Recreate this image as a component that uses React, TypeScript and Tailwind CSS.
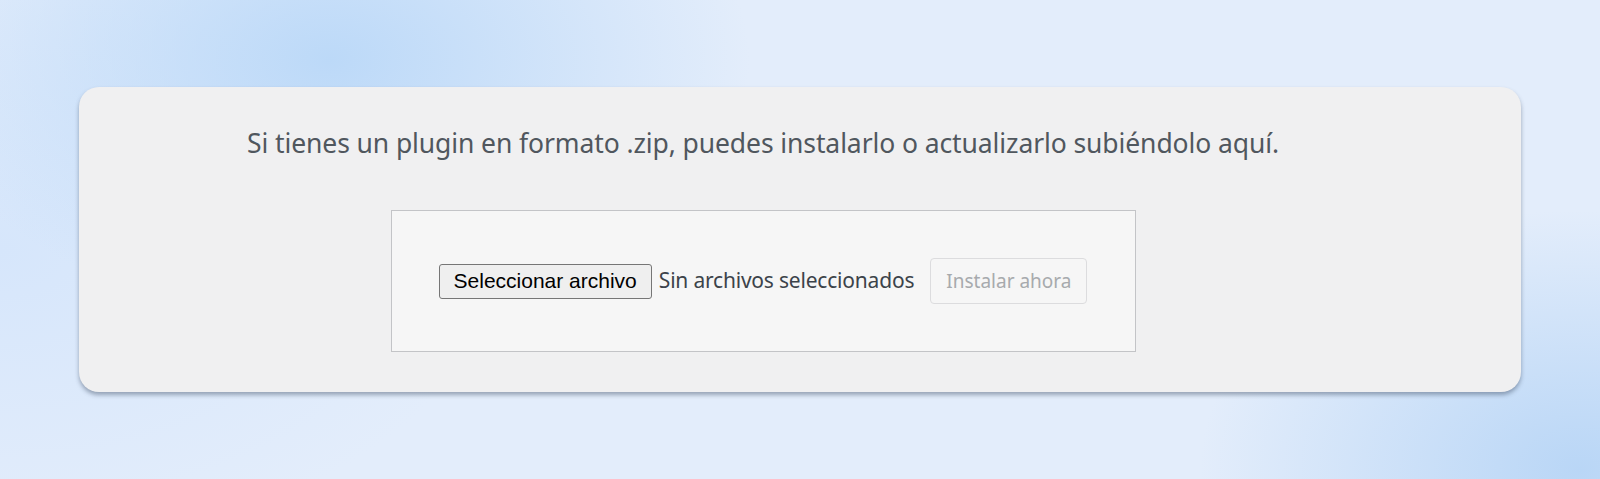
import React from 'react';

const UI_FONT = "font-['Noto_Sans','Open_Sans',sans-serif]";

export default function App() {
  return (
    <div className="w-[1600px] h-[479px] overflow-hidden bg-[#e3edfb] bg-[radial-gradient(ellipse_420px_260px_at_330px_60px,#bcd9f8_0%,rgba(188,217,248,0)_100%),radial-gradient(ellipse_380px_260px_at_1580px_470px,#b9d6f6_0%,rgba(185,214,246,0)_100%),radial-gradient(ellipse_500px_300px_at_0px_250px,#d6e6fb_0%,rgba(214,230,251,0)_100%)] pt-[87px] px-[79px]">
      {/* Upload card */}
      <div className="h-[305px] rounded-[20px] bg-[#f0f0f1] shadow-[0_3px_4px_rgba(60,75,100,0.45)] pr-[74px] flex flex-col items-center">
        <p className={`${UI_FONT} mt-[38px] text-[26.5px] leading-[36px] text-[#50575e] tracking-[-0.1px]`}>
          Si tienes un plugin en formato .zip, puedes instalarlo o actualizarlo subiéndolo aquí.
        </p>

        <div className="mt-[49px] w-[745px] h-[142px] border border-[#c3c4c7] bg-[#f6f6f6] flex items-center justify-center">
          <button className="h-[35px] px-[14px] rounded-[3px] border border-[#767676] bg-[#efefef] font-['Liberation_Sans',Arial,sans-serif] text-[21px] text-black">
            Seleccionar archivo
          </button>
          <span className={`${UI_FONT} ml-[7px] text-[21px] text-[#3c434a] tracking-[-0.2px]`}>
            Sin archivos seleccionados
          </span>
          <button className={`${UI_FONT} ml-[16px] h-[46px] px-[15px] rounded-[4px] border border-[#dcdcde] bg-[#f6f6f6] text-[19px] text-[#a7aaad]`}>
            Instalar ahora
          </button>
        </div>
      </div>
    </div>
  );
}
